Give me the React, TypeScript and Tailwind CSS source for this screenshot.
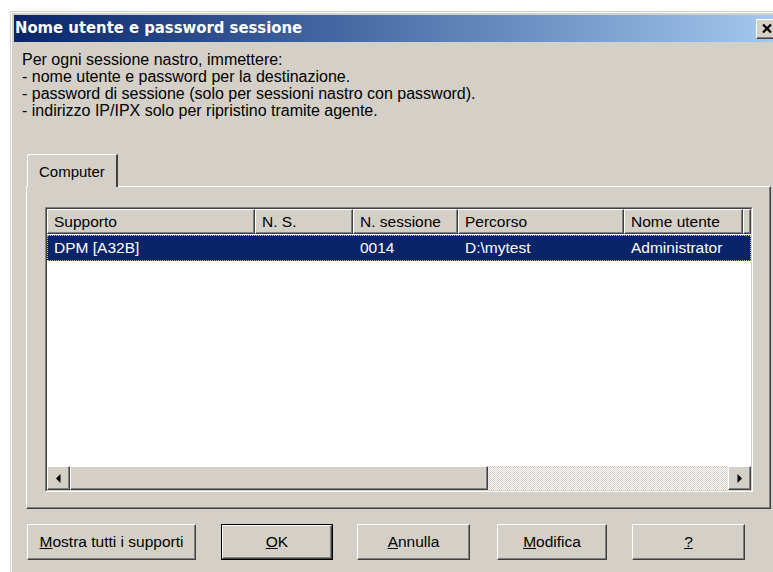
import React from "react";

const raised =
  "bg-[#d4d0c8] border border-t-white border-l-white border-r-[#404040] border-b-[#404040] shadow-[inset_-1px_-1px_0_#808080]";

const columns = [
  { label: "Supporto", w: "w-[208px]" },
  { label: "N. S.", w: "w-[98px]" },
  { label: "N. sessione", w: "w-[105px]" },
  { label: "Percorso", w: "w-[166px]" },
  { label: "Nome utente", w: "w-[119px]" },
];

const row = ["DPM [A32B]", "", "0014", "D:\\mytest", "Administrator"];

function Arrow({ dir }: { dir: "left" | "right" }) {
  return (
    <div className={`${raised} w-[23px] h-full flex items-center justify-center`}>
      <svg width="5" height="9" viewBox="0 0 5 9">
        {dir === "left" ? <path d="M4.5 0 L0 4.5 L4.5 9 Z" fill="#000" /> : <path d="M0.5 0 L5 4.5 L0.5 9 Z" fill="#000" />}
      </svg>
    </div>
  );
}

function Btn({ children, w, def }: { children: React.ReactNode; w: string; def?: boolean }) {
  return (
    <div className={`${w} h-[36px] ${def ? "border border-black" : ""}`}>
      <div className={`${raised} h-full flex items-center justify-center`}>{children}</div>
    </div>
  );
}

export default function App() {
  return (
    <div
      className="w-[773px] h-[572px] overflow-hidden bg-white pt-[11px] pl-[10px] text-black text-[15.5px]"
      style={{ fontFamily: '"Liberation Sans", Arial, sans-serif' }}
    >
      {/* dialog frame */}
      <div className="w-[777px] h-[600px] bg-[#d4d0c8] border border-t-[#d4d0c8] border-l-[#d4d0c8] p-[3px] shadow-[inset_1px_1px_0_#ffffff] flex flex-col">
        {/* caption */}
        <div className="h-[27px] shrink-0 flex items-center justify-between bg-linear-to-r from-[#0a246a] to-[#a6caf0] pl-[1px] pr-[6px]">
          <span
            className="text-white font-bold text-[16.5px] leading-none"
            style={{ fontFamily: '"DejaVu Sans Condensed", "DejaVu Sans", Verdana, sans-serif' }}
          >
            Nome utente e password sessione
          </span>
          <div className={`${raised} w-[21px] h-[20px] flex items-center justify-center`}>
            <svg width="10" height="9" viewBox="0 0 10 9">
              <path d="M1 0.5 L9 8.5 M9 0.5 L1 8.5" stroke="#000" strokeWidth="2.2" />
            </svg>
          </div>
        </div>

        {/* body */}
        <div className="flex flex-col pl-[8px] pt-[9px]">
          <div className="text-[16px] leading-[17px]">
            <p>Per ogni sessione nastro, immettere:</p>
            <p>- nome utente e password per la destinazione.</p>
            <p>- password di sessione (solo per sessioni nastro con password).</p>
            <p>- indirizzo IP/IPX solo per ripristino tramite agente.</p>
          </div>

          <div className="ml-[4px] flex flex-col">
            {/* tab strip */}
            <div className="mt-[35px] flex pl-[1px] relative z-10">
              <div className="w-[91px] h-[33px] -mb-px bg-[#d4d0c8] border-t border-l border-t-white border-l-white border-r-2 border-r-[#404040] rounded-tl-[3px] pl-[11px] pt-[6px] text-[15px]">
                Computer
              </div>
            </div>

            {/* tab page */}
            <div className="w-[745px] h-[323px] bg-[#d4d0c8] border border-t-white border-l-white border-r-[#404040] border-b-[#404040] shadow-[inset_-1px_-1px_0_#808080] pl-[18px] pt-[20px]">
              {/* list view */}
              <div className="w-[708px] h-[285px] border border-t-[#808080] border-l-[#808080] border-r-white border-b-white">
                <div className="w-full h-full bg-white border border-t-[#404040] border-l-[#404040] border-r-[#d4d0c8] border-b-[#d4d0c8] flex flex-col">
                  <div className="h-[25px] flex shrink-0">
                    {columns.map((c) => (
                      <div key={c.label} className={`${raised} ${c.w} h-full flex items-center pl-[6px]`}>
                        {c.label}
                      </div>
                    ))}
                    <div className={`${raised} w-[8px] h-full`} />
                  </div>
                  <div className="h-[26px] mt-px bg-[#0a246a] text-white flex items-center border border-dotted border-[#d8c88a]">
                    {row.map((t, i) => (
                      <div key={i} className={`${columns[i].w} pl-[6px]`}>
                        {t}
                      </div>
                    ))}
                  </div>
                  <div className="flex-1" />
                  {/* horizontal scroll bar */}
                  <div className="h-[24px] flex shrink-0">
                    <Arrow dir="left" />
                    <div className={`${raised} w-[418px] h-full`} />
                    <div className="flex-1 h-full bg-[repeating-conic-gradient(#ffffff_0%_25%,#d4d0c8_0%_50%)] bg-[length:2px_2px]" />
                    <Arrow dir="right" />
                  </div>
                </div>
              </div>
            </div>

            {/* command buttons */}
            <div className="flex mt-[15px] ml-px">
              <Btn w="w-[169px]">
                <span>
                  <span className="underline">M</span>ostra tutti i supporti
                </span>
              </Btn>
              <div className="ml-[25px]">
                <Btn w="w-[112px]" def>
                  <span>
                    <span className="underline">O</span>K
                  </span>
                </Btn>
              </div>
              <div className="ml-[24px]">
                <Btn w="w-[113px]">
                  <span>
                    <span className="underline">A</span>nnulla
                  </span>
                </Btn>
              </div>
              <div className="ml-[27px]">
                <Btn w="w-[110px]">
                  <span>
                    <span className="underline">M</span>odifica
                  </span>
                </Btn>
              </div>
              <div className="ml-[25px]">
                <Btn w="w-[113px]">
                  <span className="underline">?</span>
                </Btn>
              </div>
            </div>
          </div>
        </div>
      </div>
    </div>
  );
}
